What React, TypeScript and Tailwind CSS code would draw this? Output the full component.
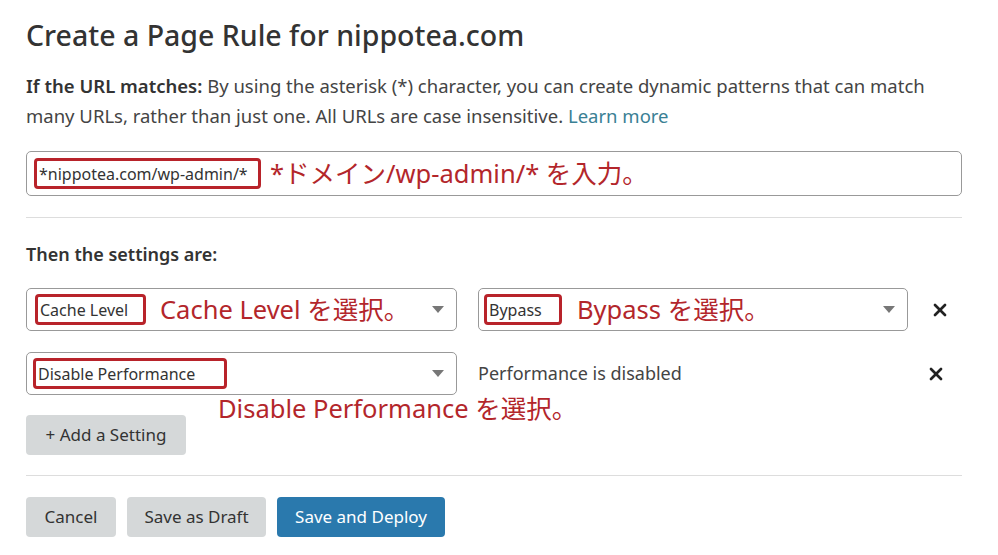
import { X } from 'lucide-react';

const font = { fontFamily: '"Noto Sans", "Noto Sans CJK JP", sans-serif' };

function Caret() {
    return (
        <svg width="12" height="7" viewBox="0 0 12 7" className="shrink-0">
            <path d="M0 0h12L6 7z" fill="#777" />
        </svg>
    );
}

function HighlightBox({ children, className = '' }: { children: React.ReactNode; className?: string }) {
    return (
        <span className={`inline-flex items-center h-[31px] px-[2px] border-[3px] border-[#b8232a] rounded-[4px] text-[16px] text-[#333] whitespace-nowrap ${className}`}>
            {children}
        </span>
    );
}

export default function App() {
    return (
        <main className="bg-white w-[998px] h-[555px] overflow-hidden relative" style={font}>
            <div className="w-[936px] ml-[26px] pt-[15px]">
                <h1 className="text-[28.5px] leading-[40px] text-[#333] font-medium">Create a Page Rule for nippotea.com</h1>

                <p className="mt-[16px] max-w-[915px] text-[18.5px] leading-[30px] text-[#444]">
                    <span className="font-semibold text-[#333]">If the URL matches:</span> By using the asterisk (*) character, you can create dynamic patterns that can match many URLs, rather than just one. All URLs are case insensitive.{' '}
                    <span className="text-[#3a8094]">Learn more</span>
                </p>

                {/* URL input */}
                <div className="mt-[20px] h-[45px] border border-[#999] rounded-[5px] flex items-center pl-[7px] gap-[9px]">
                    <HighlightBox className="w-[227px]">*nippotea.com/wp-admin/*</HighlightBox>
                    <span className="text-[25.5px] text-[#b3262b] whitespace-nowrap">*ドメイン/wp-admin/* を入力。</span>
                </div>

                <div className="mt-[21px] border-t border-[#ddd]" />

                <h2 className="mt-[23px] text-[18px] leading-[26px] font-semibold text-[#333]">Then the settings are:</h2>

                {/* Setting row 1 */}
                <div className="mt-[21px] flex items-center">
                    <div className="w-[431px] h-[43px] border border-[#999] rounded-[5px] flex items-center pl-[8px] pr-[12px]">
                        <HighlightBox className="w-[111px]">Cache Level</HighlightBox>
                        <span className="ml-[14px] text-[25.5px] text-[#b3262b] whitespace-nowrap">Cache Level を選択。</span>
                        <span className="ml-auto"><Caret /></span>
                    </div>
                    <div className="ml-[21px] w-[430px] h-[43px] border border-[#999] rounded-[5px] flex items-center pl-[5px] pr-[12px]">
                        <HighlightBox className="w-[78px]">Bypass</HighlightBox>
                        <span className="ml-[15px] text-[25.5px] text-[#b3262b] whitespace-nowrap">Bypass を選択。</span>
                        <span className="ml-auto"><Caret /></span>
                    </div>
                    <X className="ml-[22px] text-[#222]" size={20} strokeWidth={3.2} />
                </div>

                {/* Setting row 2 */}
                <div className="mt-[21px] flex items-center relative">
                    <div className="w-[431px] h-[43px] border border-[#999] rounded-[5px] flex items-center pl-[6px] pr-[12px]">
                        <HighlightBox className="w-[194px] h-[28px]">Disable Performance</HighlightBox>
                        <span className="ml-auto"><Caret /></span>
                    </div>
                    <span className="ml-[21px] text-[18px] text-[#444]">Performance is disabled</span>
                    <X className="ml-auto mr-[16px] text-[#222]" size={20} strokeWidth={3.2} />
                    <span className="absolute left-[192px] top-[41px] text-[25.5px] leading-[30px] text-[#b3262b] whitespace-nowrap">Disable Performance を選択。</span>
                </div>

                <button className="mt-[20px] h-[40px] w-[160px] bg-[#d5d8d9] rounded-[4px] text-[17px] text-[#333]">+ Add a Setting</button>

                <div className="mt-[20px] border-t border-[#ddd]" />

                <div className="mt-[21px] flex gap-[11px]">
                    <button className="h-[40px] w-[90px] bg-[#d5d8d9] rounded-[4px] text-[17px] text-[#333]">Cancel</button>
                    <button className="h-[40px] w-[139px] bg-[#d5d8d9] rounded-[4px] text-[17px] text-[#333]">Save as Draft</button>
                    <button className="h-[40px] w-[168px] bg-[#2a79ad] rounded-[4px] text-[17px] text-white">Save and Deploy</button>
                </div>
            </div>
        </main>
    );
}
